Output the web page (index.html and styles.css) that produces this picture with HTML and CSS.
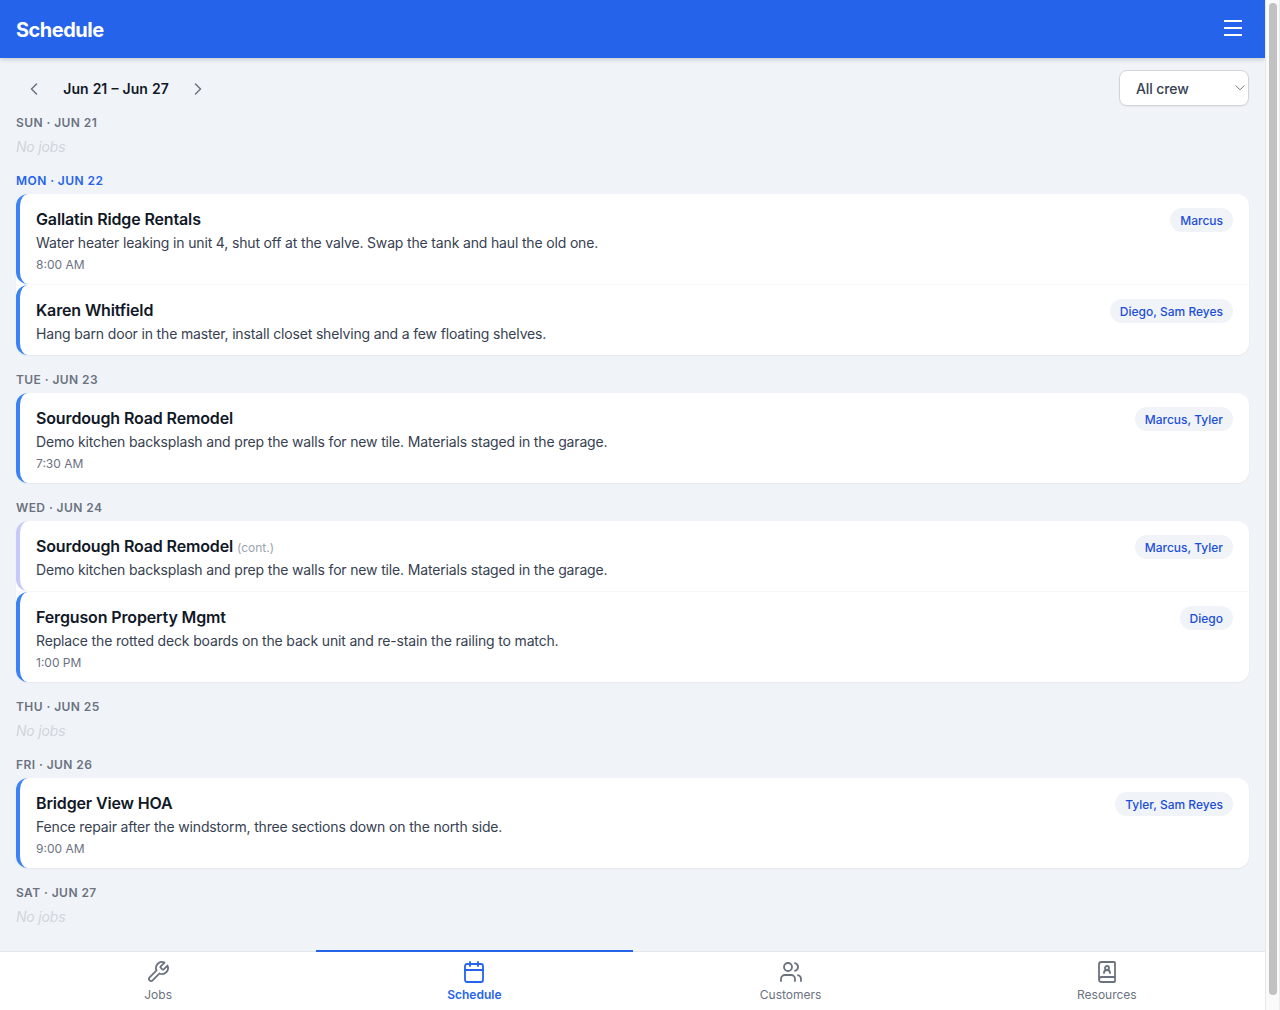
FILE: index.html
```html
<!DOCTYPE html>
<html lang="en">
<head>
<meta charset="utf-8">
<title>Schedule</title>
<link rel="stylesheet" href="styles.css">
</head>
<body>
<div class="window">
  <div class="app">
    <header class="topbar">
      <h1>Schedule</h1>
      <button class="menu" aria-label="Menu"><span></span><span></span><span></span></button>
    </header>
    <main class="content">
      <div class="toolbar">
        <div class="week">
          <button class="arrow" aria-label="Previous week"><svg width="8" height="14" viewBox="0 0 8 14"><path d="M6.5 2 1.5 7l5 5"/></svg></button>
          <span class="range">Jun 21 – Jun 27</span>
          <button class="arrow" aria-label="Next week"><svg width="8" height="14" viewBox="0 0 8 14"><path d="m1.5 2 5 5-5 5"/></svg></button>
        </div>
        <button class="crew">All crew<svg width="10" height="6" viewBox="0 0 10 6"><path d="m1 .8 4 4 4-4"/></svg></button>
      </div>

      <section class="day">
        <h2>SUN · JUN 21</h2>
        <p class="empty">No jobs</p>
      </section>
      <section class="day today">
        <h2>MON · JUN 22</h2>
        <div class="card">
          <div class="slot"><article class="job">
            <div class="info"><h3>Gallatin Ridge Rentals</h3><p class="desc">Water heater leaking in unit 4, shut off at the valve. Swap the tank and haul the old one.</p><p class="time">8:00 AM</p></div>
            <span class="pill">Marcus</span>
          </article></div>
          <div class="slot"><article class="job">
            <div class="info"><h3>Karen Whitfield</h3><p class="desc">Hang barn door in the master, install closet shelving and a few floating shelves.</p></div>
            <span class="pill">Diego, Sam Reyes</span>
          </article></div>
        </div>
      </section>
      <section class="day">
        <h2>TUE · JUN 23</h2>
        <div class="card">
          <div class="slot"><article class="job">
            <div class="info"><h3>Sourdough Road Remodel</h3><p class="desc">Demo kitchen backsplash and prep the walls for new tile. Materials staged in the garage.</p><p class="time">7:30 AM</p></div>
            <span class="pill">Marcus, Tyler</span>
          </article></div>
        </div>
      </section>
      <section class="day">
        <h2>WED · JUN 24</h2>
        <div class="card">
          <div class="slot"><article class="job continued">
            <div class="info"><h3>Sourdough Road Remodel <small>(cont.)</small></h3><p class="desc">Demo kitchen backsplash and prep the walls for new tile. Materials staged in the garage.</p></div>
            <span class="pill">Marcus, Tyler</span>
          </article></div>
          <div class="slot"><article class="job">
            <div class="info"><h3>Ferguson Property Mgmt</h3><p class="desc">Replace the rotted deck boards on the back unit and re-stain the railing to match.</p><p class="time">1:00 PM</p></div>
            <span class="pill">Diego</span>
          </article></div>
        </div>
      </section>
      <section class="day">
        <h2>THU · JUN 25</h2>
        <p class="empty">No jobs</p>
      </section>
      <section class="day">
        <h2>FRI · JUN 26</h2>
        <div class="card">
          <div class="slot"><article class="job">
            <div class="info"><h3>Bridger View HOA</h3><p class="desc">Fence repair after the windstorm, three sections down on the north side.</p><p class="time">9:00 AM</p></div>
            <span class="pill">Tyler, Sam Reyes</span>
          </article></div>
        </div>
      </section>
      <section class="day">
        <h2>SAT · JUN 27</h2>
        <p class="empty">No jobs</p>
      </section>
    </main>
    <nav class="tabs">
      <a class="tab"><svg viewBox="0 0 24 24"><path d="M14.7 6.3a1 1 0 0 0 0 1.4l1.6 1.6a1 1 0 0 0 1.4 0l3.77-3.77a6 6 0 0 1-7.94 7.94l-6.91 6.91a2.12 2.12 0 0 1-3-3l6.91-6.91a6 6 0 0 1 7.94-7.94l-3.76 3.76z"/></svg>Jobs</a>
      <a class="tab active"><svg viewBox="0 0 24 24"><path d="M8 2v4M16 2v4M3 10h18"/><rect x="3" y="4" width="18" height="18" rx="2"/></svg>Schedule</a>
      <a class="tab"><svg viewBox="0 0 24 24"><path d="M16 21v-2a4 4 0 0 0-4-4H6a4 4 0 0 0-4 4v2M22 21v-2a4 4 0 0 0-3-3.87M16 3.13a4 4 0 0 1 0 7.75"/><circle cx="9" cy="7" r="4"/></svg>Customers</a>
      <a class="tab"><svg viewBox="0 0 24 24"><path d="M15 13a3 3 0 1 0-6 0M4 19.5v-15A2.5 2.5 0 0 1 6.5 2H19a1 1 0 0 1 1 1v18a1 1 0 0 1-1 1H6.5a1 1 0 0 1 0-5H20"/><circle cx="12" cy="8" r="2"/></svg>Resources</a>
    </nav>
  </div>
  <div class="scrollbar"><div class="thumb"></div></div>
</div>
</body>
</html>
```
FILE: styles.css
```css
* { box-sizing: border-box; margin: 0; padding: 0; }
body { font-family: Inter, "Liberation Sans", sans-serif; background: #f0f4f9; color: #111827; overflow: hidden; }
button { font: inherit; color: inherit; background: none; border: 0; }
svg { fill: none; stroke: currentColor; stroke-linecap: round; stroke-linejoin: round; }

.window { display: flex; height: 1010px; }
.app { flex: 1; display: flex; flex-direction: column; min-width: 0; }

.topbar { flex: none; height: 58px; padding: 2px 16px 0; display: flex; align-items: center; justify-content: space-between; background: #2563eb; color: #fff; box-shadow: 0 2px 4px rgba(0, 0, 0, .15); }
.topbar h1 { font-size: 20px; line-height: 28px; font-weight: 700; letter-spacing: -.5px; }
.menu { width: 32px; height: 24px; margin-bottom: 4px; display: flex; flex-direction: column; align-items: center; justify-content: center; gap: 5px; }
.menu span { width: 18px; height: 2px; background: #fff; }

.content { flex: 1; min-height: 0; overflow: hidden; padding: 12px 16px 0; }
.toolbar { display: flex; justify-content: space-between; height: 36px; margin-bottom: 8px; }
.week { display: flex; align-items: center; color: #6b7280; }
.arrow { width: 36px; height: 36px; padding-top: 1px; display: grid; place-items: center; }
.arrow svg { stroke-width: 1.5; }
.range { width: 128px; padding-top: 2px; text-align: center; white-space: nowrap; font-size: 14px; line-height: 20px; font-weight: 600; word-spacing: .6px; color: #111827; }
.crew { width: 130px; padding: 1px 3px 0 16px; display: flex; align-items: center; justify-content: space-between; background: #fff; border: 1px solid #d1d5db; border-radius: 8px; box-shadow: 0 1px 2px rgba(0, 0, 0, .05); font-size: 14px; font-weight: 500; letter-spacing: -.1px; color: #374151; }
.crew svg { color: #6b7280; margin-bottom: 1px; }

.day { margin-bottom: 16px; }
.day h2 { height: 22px; padding-top: 1px; font-size: 12px; line-height: 16px; font-weight: 600; letter-spacing: .43px; color: #6b7280; }
.today h2 { color: #2563eb; }
.day .empty { height: 20px; padding-top: 1px; font-size: 14px; line-height: 20px; font-style: italic; letter-spacing: -.18px; color: #d1d5db; }

.card { background: #fff; border-radius: 12px; box-shadow: 0 1px 2px rgba(0, 0, 0, .05); }
.job { display: flex; align-items: flex-start; justify-content: space-between; padding: 13px 16px 11px; border-left: 4px solid #3b82f6; border-radius: 12px; }
.slot + .slot { border-top: 1px solid #f7f8fa; }
.continued { border-left-color: #c7c9fb; }
.info h3 { font-size: 16px; line-height: 24px; font-weight: 600; letter-spacing: -.14px; }
.info small { font-size: 12px; line-height: 1; font-weight: 400; letter-spacing: 0; color: #9ca3af; }
.desc { margin-top: 2px; font-size: 14px; line-height: 20px; letter-spacing: -.16px; color: #374151; }
.time { margin-top: 4px; font-size: 12px; line-height: 16px; color: #6b7280; }
.pill { margin-top: 1px; padding: 5px 10px 3px; border-radius: 12px; background: #f0f4f9; font-size: 12px; line-height: 16px; font-weight: 500; color: #1d4ed8; }

.tabs { flex: none; height: 59px; display: flex; background: #fff; border-top: 1px solid #e5e7eb; }
.tab { flex: 1; margin-top: -2px; padding-top: 8px; display: flex; flex-direction: column; align-items: center; gap: 3px; border-top: 2px solid transparent; font-size: 12px; line-height: 16px; color: #6b7280; }
.tab svg { width: 24px; height: 24px; stroke-width: 1.8; }
.tab.active { color: #2563eb; border-color: #2563eb; font-weight: 600; }

.scrollbar { width: 15px; padding: 3px; background: #fafafa; border-left: 1px solid #e8e8e8; border-right: 1px solid #ededed; }
.thumb { width: 8px; height: 992px; border-radius: 4px; background: #c1c1c1; }
```
